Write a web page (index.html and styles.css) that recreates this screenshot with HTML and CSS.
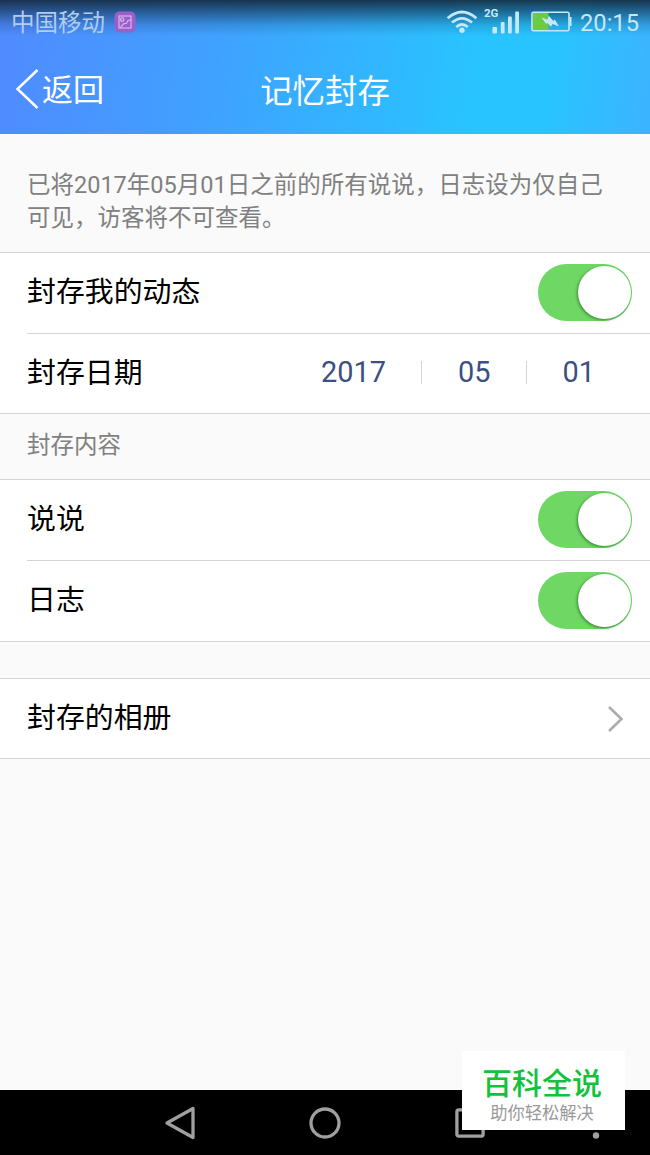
FILE: index.html
```html
<!DOCTYPE html>
<html lang="zh-CN">
<head>
    <meta charset="UTF-8">
    <meta name="viewport" content="width=device-width, initial-scale=1.0">
    <title>记忆封存</title>
    <link rel="stylesheet" href="styles.css">
</head>
<body>
    <header class="header">
        <div class="status-bar">
            <span class="carrier">中国移动</span>
            <svg class="notice-icon" width="22" height="22" viewBox="0 0 22 22" fill="none">
                <rect x="0.5" y="0.5" width="21" height="21" rx="5" fill="#9a5fc8"/>
                <g stroke="#d8b5ee" stroke-width="1.2">
                    <rect x="5" y="5" width="12" height="12"/>
                    <circle cx="8.2" cy="8.6" r="1.7"/>
                    <path d="M6.5 16.5L9.5 12.8L12.5 12.3L14 9.5L17 8.8"/>
                </g>
            </svg>
            <div class="status-icons">
                <svg class="wifi" width="32" height="24" viewBox="0 0 32 24" fill="none" stroke="#c5e8fa" stroke-width="2.7">
                    <path d="M1.6 8.2Q16 -4.2 30.4 8.2"/>
                    <path d="M6 12.6Q16 4 26 12.6"/>
                    <path d="M10.2 17Q16 12 21.8 17"/>
                    <circle cx="16" cy="20.2" r="2.7" fill="#c5e8fa" stroke="none"/>
                </svg>
                <div class="signal">
                    <span class="network">2G</span>
                    <svg width="28" height="23" viewBox="0 0 28 23" fill="#c5e8fa">
                        <rect x="0.5" y="16" width="4.5" height="6.5" rx="1"/>
                        <rect x="8.8" y="11" width="3.8" height="11.5" rx="1"/>
                        <rect x="16" y="5.5" width="3.8" height="17" rx="1"/>
                        <rect x="23.2" y="0.5" width="3.8" height="22" rx="1"/>
                    </svg>
                </div>
                <svg class="battery" width="41" height="22" viewBox="0 0 41 22" fill="none">
                    <rect x="2" y="2" width="15.5" height="17" fill="#6ccb45"/>
                    <rect x="1" y="1.2" width="37" height="18.6" rx="1.5" stroke="#c5e8fa" stroke-width="1.6"/>
                    <path d="M38.5 6H40.5V15H38.5Z" fill="#c5e8fa"/>
                    <path d="M10.5 6.5L16.5 8.8L17.8 4.8L22.3 10L23.8 8.5L28 15.5L21.5 13L20 15.8L16.5 12L15 12.8Z" fill="#c5e8fa"/>
                </svg>
                <span class="time">20:15</span>
            </div>
        </div>
        <nav class="title-bar">
            <a class="back" href="#">
                <svg width="24" height="40" viewBox="0 0 24 40" fill="none" stroke="#fff" stroke-width="2.5">
                    <path d="M22.5 1L2.5 20L22.5 39"/>
                </svg>
                <span>返回</span>
            </a>
            <h1 class="title">记忆封存</h1>
        </nav>
    </header>

    <main class="content">
        <p class="notice">已将2017年05月01日之前的所有说说，日志设为仅自己<br>可见，访客将不可查看。</p>

        <div class="group">
            <div class="row">
                <span>封存我的动态</span>
                <span class="switch"></span>
            </div>
            <div class="row">
                <span>封存日期</span>
                <div class="date">
                    <span class="year">2017</span>
                    <span class="month">05</span>
                    <span class="day">01</span>
                </div>
            </div>
        </div>

        <h2 class="section-title">封存内容</h2>

        <div class="group types">
            <div class="row">
                <span>说说</span>
                <span class="switch"></span>
            </div>
            <div class="row">
                <span>日志</span>
                <span class="switch"></span>
            </div>
        </div>

        <div class="group album">
            <div class="row">
                <span>封存的相册</span>
                <svg class="arrow" width="18" height="28" viewBox="0 0 18 28" fill="none" stroke="#acacac" stroke-width="2.6">
                    <path d="M2 2L14.5 14L2 26"/>
                </svg>
            </div>
        </div>
    </main>

    <footer class="nav-bar">
        <svg width="32" height="36" viewBox="0 0 32 36" fill="none" stroke="#a0a0a0" stroke-width="3.3" stroke-linejoin="round">
            <path d="M29 3.5V32.5L3 18Z"/>
        </svg>
        <svg width="32" height="32" viewBox="0 0 32 32" fill="none" stroke="#a0a0a0" stroke-width="3.3">
            <circle cx="16" cy="16" r="14"/>
        </svg>
        <svg width="30" height="30" viewBox="0 0 30 30" fill="none" stroke="#a0a0a0" stroke-width="3.3">
            <rect x="1.9" y="1.9" width="26.2" height="26.2" rx="1.5"/>
        </svg>
        <svg class="more" width="8" height="32" viewBox="0 0 8 32" fill="#a0a0a0">
            <circle cx="4" cy="4" r="3.2"/>
            <circle cx="4" cy="16" r="3.2"/>
            <circle cx="4" cy="28.5" r="3.2"/>
        </svg>
    </footer>

    <div class="watermark">
        <strong>百科全说</strong>
        <span>助你轻松解决</span>
    </div>
</body>
</html>
```

FILE: styles.css
```css
* {
    box-sizing: border-box;
}
body {
    margin: 0;
    height: 1155px;
    display: flex;
    flex-direction: column;
    position: relative;
    overflow: hidden;
    background-color: #fafafa;
    font-family: Roboto, "Noto Sans CJK SC", sans-serif;
    color: #000;
}
.header {
    height: 134px;
    background: linear-gradient(to bottom, rgba(20,40,60,0.9) 0, rgba(20,50,80,0.6) 12px, rgba(20,60,100,0.2) 25px, rgba(20,60,100,0) 36px),
        linear-gradient(98deg, #518aff 0%, #3fa2ff 34%, #28c4ff 73%, #28c4ff 84%, #3cb3ff 100%);
}
.status-bar {
    height: 44px;
    padding: 0 11px;
    display: flex;
    align-items: center;
    color: #c5e8fa;
}
.carrier {
    padding-top: 2px;
    font-size: 23.5px;
    line-height: 42px;
    color: #b0ccf0;
}
.notice-icon {
    margin-left: 9px;
}
.status-icons {
    margin-left: auto;
    display: flex;
    align-items: center;
}
.signal {
    margin: 0 11px 0 6px;
    display: flex;
}
.network {
    width: 8px;
    margin-top: -4px;
    font-size: 11.5px;
    font-weight: bold;
    line-height: 12px;
}
.time {
    margin-left: 8px;
    padding-top: 2px;
    font-size: 23.7px;
    line-height: 42px;
}
.title-bar {
    height: 90px;
    padding: 0 15px;
    display: grid;
    grid-template-columns: 1fr auto 1fr;
    align-items: center;
    color: #fff;
}
.back {
    display: flex;
    align-items: center;
    gap: 3px;
    font-size: 31px;
    line-height: 44px;
    color: #fff;
    text-decoration: none;
}
.back span {
    padding-top: 4px;
}
.title {
    margin: 0;
    padding-top: 6px;
    font-size: 32.4px;
    font-weight: normal;
    line-height: 48px;
}
.content {
    flex: 1;
}
.notice {
    height: 118px;
    margin: 0;
    padding: 35px 0 0 27px;
    font-size: 23.5px;
    line-height: 32.5px;
    white-space: nowrap;
    color: #808080;
}
.group {
    padding-left: 27px;
    background-color: #fff;
    border-top: 1px solid #d4d4d4;
    border-bottom: 1px solid #d4d4d4;
}
.row {
    height: 80px;
    padding: 0 18px 2px 0;
    display: flex;
    align-items: center;
    justify-content: space-between;
    font-size: 28.9px;
    line-height: 42px;
}
.row + .row {
    border-top: 1px solid #d4d4d4;
}
.types .row + .row {
    height: 81px;
}
.switch {
    width: 94px;
    height: 57px;
    padding: 2px 1px;
    display: flex;
    justify-content: flex-end;
    border-radius: 29px;
    background-color: #6fd865;
}
.switch::after {
    content: "";
    width: 53px;
    height: 53px;
    border-radius: 50%;
    background-color: #fff;
    box-shadow: -1px 1px 3px rgba(0,60,0,0.5);
}
.date {
    display: flex;
    align-items: center;
    padding-right: 37px;
    line-height: 23px;
    color: #3c4f82;
}
.year {
    padding-right: 35px;
}
.month {
    padding: 0 35px 0 36px;
}
.day {
    padding-left: 36px;
}
.month,
.day {
    border-left: 1px solid #d4d4d4;
}
.section-title {
    height: 65px;
    margin: 0;
    padding: 13px 0 0 27px;
    font-size: 23.5px;
    font-weight: normal;
    line-height: 36px;
    color: #808080;
}
.album {
    margin-top: 36px;
}
.album .row {
    height: 79px;
    padding-bottom: 1px;
}
.arrow {
    margin: 2px 7px 0 0;
}
.nav-bar {
    height: 65px;
    padding: 0 50px 0 164px;
    display: grid;
    grid-template-columns: 145px 145.5px 1fr auto;
    align-items: center;
    background-color: #000;
}
.watermark {
    position: absolute;
    top: 1051px;
    left: 462px;
    width: 163px;
    height: 79px;
    padding: 14px 3px 0 0;
    display: flex;
    flex-direction: column;
    align-items: center;
    background-color: #fff;
}
.watermark strong {
    font-size: 30px;
    font-weight: 500;
    line-height: 38px;
    color: #0fc43a;
}
.watermark span {
    font-size: 17.3px;
    line-height: 20px;
    color: #999;
}
```
